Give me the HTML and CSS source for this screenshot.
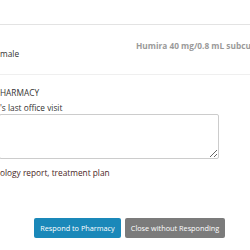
FILE: index.html
```html
<!DOCTYPE html>
<html lang="en">
<head>
    <meta charset="UTF-8">
    <meta name="viewport" content="width=device-width, initial-scale=1.0">
    <title>Prior Authorization Request</title>
    <link rel="stylesheet" href="styles.css">
</head>
<body>

    <div class="modal-body">

        <!-- Patient / drug summary -->
        <div class="summary">
            <div class="patient">
                <span class="gender">male</span>
            </div>
            <div class="drug">Humira 40 mg/0.8 mL subcu</div>
        </div>

        <!-- Response to pharmacy -->
        <div class="response">
            <h3 class="section-title">HARMACY</h3>
            <label for="lastVisit">'s last office visit</label>
            <textarea id="lastVisit"></textarea>
            <p class="note">ology report, treatment plan</p>
        </div>

        <div class="actions">
            <button class="btn btn-primary">Respond to Pharmacy</button>
            <button class="btn btn-default">Close without Responding</button>
        </div>

    </div>

</body>
</html>
```

FILE: styles.css
```css
body {
    margin: 0;
    font-family: "Open Sans", "Noto Sans", sans-serif;
    font-size: 8.3px;
    color: #333;
    background: #fff;
    overflow: hidden;
}
.modal-body {
    width: 250px;
}
.summary {
    display: grid;
    grid-template-columns: 136px 1fr;
    margin-top: 24px;
    height: 49px;
    border-top: 1px solid #e3e3e3;
    border-bottom: 1px solid #efefef;
}
.patient {
    padding-top: 23px;
}
.drug {
    padding-top: 15px;
    white-space: nowrap;
    overflow: hidden;
    font-weight: bold;
    font-size: 8.3px;
    color: #9a9a9a;
}
.response {
    padding-top: 12px;
}
.section-title {
    margin: 0;
    font-size: 8.3px;
    font-weight: 500;
    line-height: 12px;
}
label {
    display: block;
    margin-top: 3px;
    line-height: 12px;
}
textarea {
    display: block;
    box-sizing: border-box;
    width: 220px;
    height: 45px;
    margin: 0 0 0 -1px;
    border: 1px solid #ccc;
    border-radius: 2px;
    font-family: inherit;
}
.note {
    margin: 8px 0 0;
    line-height: 12px;
    color: #4a2626;
}
.actions {
    display: flex;
    gap: 4px;
    padding: 39px 0 0 34px;
}
.btn {
    height: 20px;
    padding: 0;
    border: none;
    border-radius: 2px;
    color: #fff;
    white-space: nowrap;
    font-family: inherit;
    font-size: 7.3px;
}
.btn-primary {
    width: 87px;
    background-color: #1a88b9;
}
.btn-default {
    width: 100px;
    background-color: #7b7b7b;
}
```
